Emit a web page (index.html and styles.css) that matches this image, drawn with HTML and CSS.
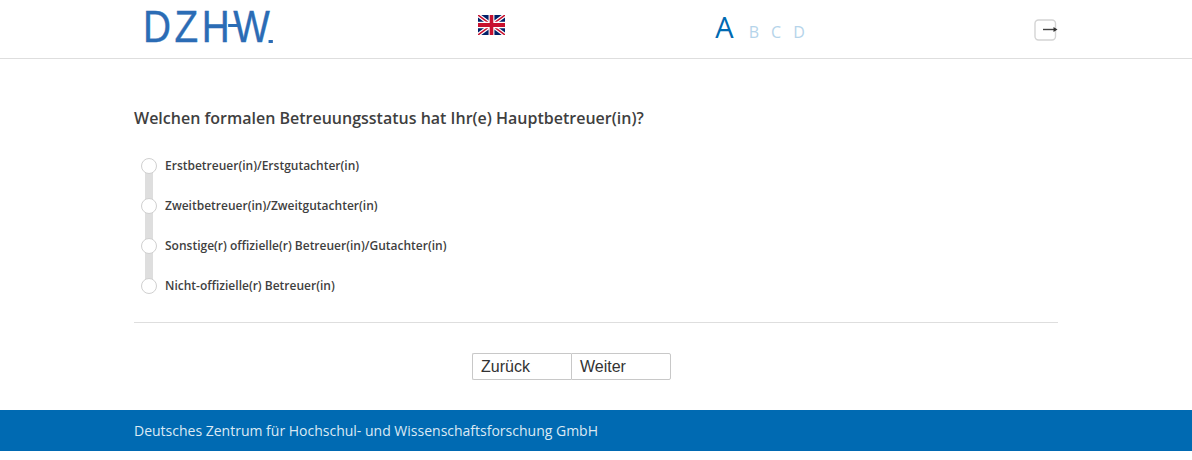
FILE: index.html
```html
<!DOCTYPE html>
<html lang="de">
<head>
  <meta charset="UTF-8" />
  <title>DZHW - Befragung</title>
  <link rel="stylesheet" href="styles.css">
</head>
<body>
  <header class="topbar">
    <div class="topbar-inner">
      <div class="logo-cell">
        <div class="logo">DZHW<span class="logo-dot"></span><span class="logo-line"></span></div>
      </div>
      <div class="flag-cell">
        <svg class="flag" width="27" height="20" viewBox="0 0 60 40" preserveAspectRatio="none">
          <rect width="60" height="40" fill="#012169" />
          <path d="M0 0L60 40M60 0L0 40" stroke="#fff" stroke-width="8" />
          <path d="M0 0L60 40M60 0L0 40" stroke="#c8102e" stroke-width="3" />
          <path d="M30 0V40M0 20H60" stroke="#fff" stroke-width="13" />
          <path d="M30 0V40M0 20H60" stroke="#c8102e" stroke-width="8" />
        </svg>
      </div>
      <div class="steps">
        <span class="step step-active">A</span>
        <span class="step">B</span>
        <span class="step">C</span>
        <span class="step">D</span>
      </div>
      <div class="logout">
        <svg width="24" height="22" viewBox="0 0 24 22">
          <rect x="1" y="1" width="20.5" height="20" rx="3.5" fill="#fff" stroke="#d4d4d4" stroke-width="1.4" />
          <path d="M9 10.5H20" stroke="#444" stroke-width="1.4" />
          <path d="M19.5 8L23.5 10.5L19.5 13Z" fill="#333" />
        </svg>
      </div>
    </div>
  </header>

  <main class="content">
    <h1 class="question">Welchen formalen Betreuungsstatus hat Ihr(e) Hauptbetreuer(in)?</h1>
    <ul class="options">
      <li class="option"><span class="radio"></span>Erstbetreuer(in)/Erstgutachter(in)</li>
      <li class="option"><span class="radio"></span>Zweitbetreuer(in)/Zweitgutachter(in)</li>
      <li class="option"><span class="radio"></span>Sonstige(r) offizielle(r) Betreuer(in)/Gutachter(in)</li>
      <li class="option"><span class="radio"></span>Nicht-offizielle(r) Betreuer(in)</li>
    </ul>
    <div class="nav-buttons">
      <button class="nav-btn" type="button">Zurück</button>
      <button class="nav-btn" type="button">Weiter</button>
    </div>
  </main>

  <footer class="footer">
    <div class="footer-inner">Deutsches Zentrum für Hochschul- und Wissenschaftsforschung GmbH</div>
  </footer>
</body>
</html>
```

FILE: styles.css
```css
* {
  box-sizing: border-box;
}
body {
  margin: 0;
  background: #fff;
  font-family: "Open Sans", sans-serif;
  color: #3f3f3f;
}

/* Header */
.topbar {
  height: 59px;
  border-bottom: 1px solid #dedede;
}
.topbar-inner {
  width: 924px;
  height: 58px;
  margin: 0 auto;
  display: flex;
}
.logo-cell {
  width: 344px;
  padding: 4px 0 0 9px;
}
.logo {
  position: relative;
  width: 148px;
  font-family: "Liberation Sans", sans-serif;
  font-size: 45px;
  line-height: 46px;
  letter-spacing: 4.2px;
  color: #2b6cb5;
  -webkit-text-stroke: 0.4px #2b6cb5;
  white-space: nowrap;
  transform: scaleX(0.86);
  transform-origin: left center;
}
.logo-dot {
  position: absolute;
  left: 146px;
  top: 36px;
  width: 5px;
  height: 3px;
  background: #2b6cb5;
}
.logo-line {
  position: absolute;
  left: 99px;
  top: 20px;
  width: 14px;
  height: 3px;
  background: #2b6cb5;
}
.flag-cell {
  width: 238px;
  padding-top: 15px;
}
.flag {
  display: block;
}
.steps {
  width: 319px;
  display: flex;
  align-items: baseline;
  padding-top: 7px;
  height: 50px;
}
.step {
  margin-right: 12px;
  font-size: 16px;
  color: #b5d4ea;
}
.step-active {
  margin-right: 15px;
  font-size: 29px;
  color: #006ab2;
}
.logout {
  padding-top: 19px;
}
.logout svg {
  display: block;
}

/* Question */
.content {
  width: 924px;
  margin: 0 auto;
}
.question {
  margin: 0;
  padding-top: 48px;
  font-size: 16px;
  font-weight: 600;
  line-height: 22px;
  color: #3f3f3f;
}
.options {
  margin: 0;
  padding: 16px 0 17px;
  list-style: none;
  border-bottom: 1px solid #dedede;
}
.option {
  position: relative;
  display: flex;
  align-items: center;
  height: 40px;
  padding-left: 7px;
  font-size: 12px;
  font-weight: 600;
  color: #3f3f3f;
}
.option:not(:last-child)::after {
  content: "";
  position: absolute;
  left: 11px;
  top: 20px;
  width: 8px;
  height: 40px;
  background: #dedede;
}
.radio {
  position: relative;
  z-index: 1;
  width: 16px;
  height: 16px;
  margin: 2px 8px 0 0;
  border: 1px solid #d0d0d0;
  border-radius: 50%;
  background: #fff;
}

/* Buttons */
.nav-buttons {
  display: flex;
  padding: 30px 0 30px 338px;
}
.nav-btn {
  width: 100px;
  height: 27px;
  padding: 0 0 0 8px;
  border: 1px solid #c8c8c8;
  background: #fff;
  font-family: "Liberation Sans", sans-serif;
  font-size: 16px;
  text-align: left;
  color: #333;
}
.nav-btn:first-child {
  width: 99px;
  border-right: 0;
  border-radius: 2px 0 0 2px;
}
.nav-btn:last-child {
  border-radius: 0 2px 2px 0;
}

/* Footer */
.footer {
  height: 41px;
  background: #006ab2;
}
.footer-inner {
  width: 924px;
  margin: 0 auto;
  font-size: 14px;
  line-height: 41px;
  color: #dbe9f4;
}
```
